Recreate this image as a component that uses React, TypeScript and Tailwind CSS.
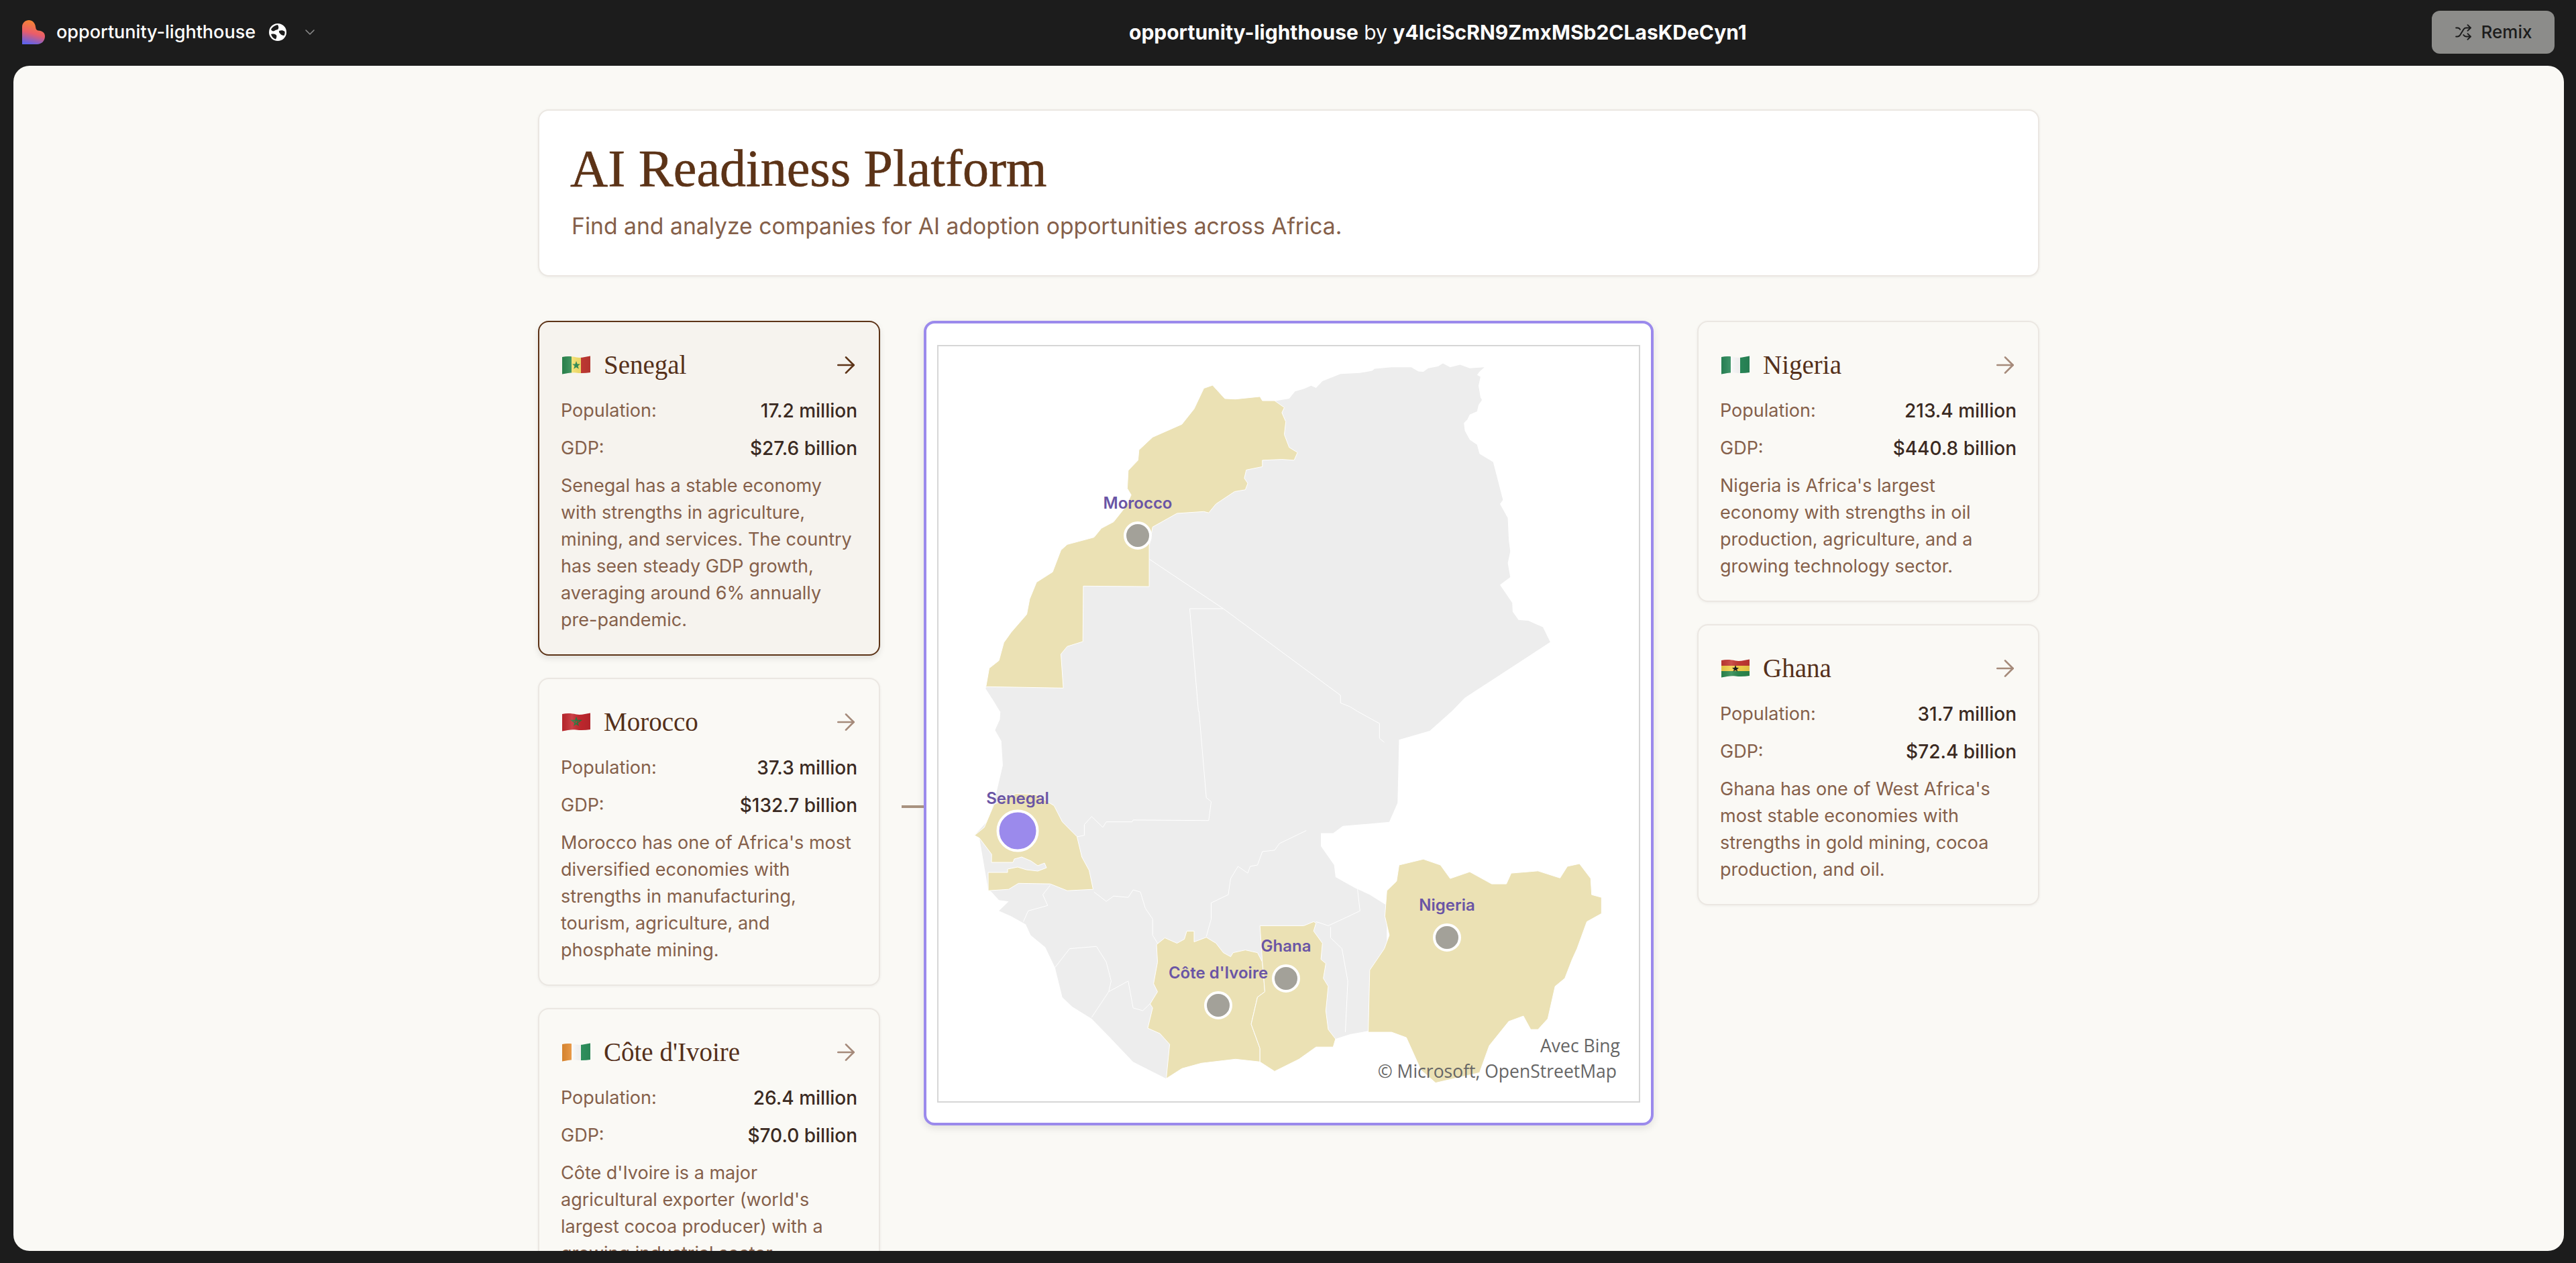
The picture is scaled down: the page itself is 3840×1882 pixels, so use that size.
import { ArrowRight, ChevronDown, Shuffle } from "lucide-react";

type P = [number, number];
const A = (pts: number[]): P[] => { const o: P[] = []; for (let i = 0; i < pts.length; i += 2) o.push([1340 + pts[i] / 1.375, 460 + pts[i + 1] / 2.613]); return o; };
const B = (pts: number[]): P[] => { const o: P[] = []; for (let i = 0; i < pts.length; i += 2) o.push([1340 + pts[i] / 1.375, 1060 + pts[i + 1] / 2.489]); return o; };
const str = (p: P[]) => p.map((q) => `${q[0].toFixed(1)},${q[1].toFixed(1)}`).join(" ");

const land = [
  ...A([770,360,800,350,812,322,830,312,845,300,855,308,868,282,905,254,945,250,970,242,975,234,1010,228,1050,228,1065,244,1075,246,1085,232,1105,225,1115,213,1130,228,1150,218,1170,232,1200,228,1190,245,1185,258,1192,265,1188,300,1192,345,1195,355,1188,375,1185,400,1170,412,1165,432,1158,445,1160,475,1170,510,1185,530,1190,565,1218,597,1238,745,1232,760,1248,815,1250,900,1253,945,1248,990,1253,1045,1232,1075,1257,1145,1258,1180,1270,1212,1290,1215,1320,1240,1335,1298,1160,1515,1133,1568]),
  ...B([1133,0,1088,72,1025,105,1022,340,1005,410,910,425,890,452,865,452,865,500,892,570,895,615,935,655,965,680,1000,720,1000,900,980,1000,980,1180,925,1197,895,1215,700,1200,560,1300,548,1362,480,1300,430,1205,395,1140,355,1095,335,1060,320,950,300,875,270,830,260,790,230,760,205,740,225,705,205,700,190,670,183,660,165,470,155,460,185,400,200,300,213,200,210,110,197,70,207,30,208,0]),
  ...A([207,1568,195,1530,178,1480,178,1470,400,1000,500,800]),
];
const morocco = A([178,1475,185,1400,205,1370,215,1300,230,1260,262,1190,268,1130,282,1065,315,1025,332,940,345,918,400,890,415,855,440,830,465,770,476,725,468,700,470,630,490,590,492,550,520,500,580,450,605,390,625,310,643,298,668,350,690,352,740,342,745,358,770,358,790,385,785,405,793,440,790,490,800,540,817,560,810,590,785,587,745,590,745,615,712,628,708,660,715,680,710,705,688,712,650,760,635,795,625,790,570,797,520,850,513,925,513,1082,378,1080,377,1296,345,1315,332,1345,337,1477,180,1472]);
const gambia: P[] = [[1473,1300],[1502,1300],[1502,1295],[1517,1292],[1530,1296],[1547,1298],[1560,1293],[1557,1286],[1547,1290],[1537,1283],[1523,1277],[1512,1280],[1510,1285],[1478,1285]];
const senegal = [
  ...B([155,460,175,430,195,345,240,305,280,308,318,350,335,410,365,465,375,540,390,590,398,660,345,665,310,640,245,638,225,660,183,665]),
  ...gambia,
  ...B([190,530,165,470]),
];
const ivory = B([548,1362,555,1235,535,1195,510,1175,520,1100,515,1085,530,1040,522,1010,530,930,528,865,545,840,570,860,585,845,590,815,605,815,605,855,630,838,650,860,665,895,680,910,685,895,710,885,735,895,745,930,750,1040,735,1060,722,1160,740,1250,740,1300,690,1290,620,1305,580,1325]);
const ghana = B([740,795,830,795,850,780,855,785,850,815,868,860,865,920,875,935,870,990,880,1020,875,1110,880,1180,895,1215,890,1245,855,1245,820,1290,770,1335,740,1300,740,1250,722,1160,735,1060,750,1040,745,930]);
const nigeria = B([962,1190,965,960,995,880,1005,830,996,760,1000,665,1020,630,1025,570,1075,548,1110,570,1130,620,1170,595,1215,640,1245,640,1255,600,1310,592,1355,618,1370,575,1395,565,1418,620,1420,680,1440,690,1440,750,1410,780,1390,880,1380,920,1365,990,1345,1020,1330,1140,1310,1180,1295,1180,1280,1130,1250,1150,1210,1240,1190,1340,1100,1378,1070,1330,1040,1210,1010,1190]);
const borders: P[][] = [
  [...A([513,975,665,1168,905,1505,905,1535,925,1550]), ...B([940,0,985,45,985,100,995,115])],
  A([596,1168,665,1168]),
  [...A([596,1168,614,1568]), ...B([615,0,630,320,640,335,635,405,480,403,478,410,425,410,418,430,395,390,380,420,380,460,365,465])],
  B([835,442,780,490,770,515,745,520,735,570,720,575,715,600,695,575,680,620,675,680,640,710,640,770,630,835]),
  B([855,780,880,795,910,770,945,740,940,660]),
  B([885,800,885,840,908,880,920,1000,915,1190]),
  B([400,670,425,705,440,685,470,690,480,662,495,670,505,730,520,770,520,830,530,860]),
  B([310,645,295,680,305,720,265,740,255,780]),
  B([320,950,350,880,405,872,425,930,435,1000,430,1040,395,1135]),
  B([430,1040,470,1000,480,1100,500,1110,520,1075]),
];

function Globe() {
  return (
    <svg width="28" height="28" viewBox="0 0 28 28" className="shrink-0">
      <circle cx="14" cy="14" r="13" fill="#fff" />
      <path d="M4 10C6 6 10 3.500 14 3c1 2 2 4 .5 6.500C13 11 11 10 9 12c-2 1-4 0-5-2zM16 12c3-1 6-1 8.500 1 .3 2 0 4-1 6-2 0-5-1-6-3-1-1-2-2-1.500-4zM4 17c3-1 6-.5 8 1.500 1 1.500 0 4-1 6C8 23.500 5 21 4 17z" fill="#1c1c1c" />
    </svg>
  );
}

function Flag({ c }: { c: string }) {
  return (
    <svg width="42" height="32" viewBox="0 0 42 32" className="shrink-0">
      <defs>
        <linearGradient id={`g${c}`} x1="0" y1="0" x2="1" y2="0">
          <stop offset="0" stopColor="#000" stopOpacity="0.08" />
          <stop offset="0.35" stopColor="#fff" stopOpacity="0.12" />
          <stop offset="0.7" stopColor="#000" stopOpacity="0.04" />
          <stop offset="1" stopColor="#000" stopOpacity="0.1" />
        </linearGradient>
        <clipPath id={`c${c}`}>
          <path d="M0 4C8 2.500 14 3 21 4.500S35 3.500 42 2.500V27C35 28 28 28.500 21 27.500S8 28 0 29.500Z" />
        </clipPath>
      </defs>
      <g clipPath={`url(#c${c})`}>
        {c === "sn" && (<g><rect x="0" y="0" width="14" height="32" fill="#2c8a50" /><rect x="14" y="0" width="14" height="32" fill="#f6e06a" /><rect x="28" y="0" width="14" height="32" fill="#c53a34" /><polygon points="21,10 22.600,14.500 27,14.500 23.500,17.300 24.800,21.800 21,19.200 17.200,21.800 18.500,17.300 15,14.500 19.400,14.500" fill="#2c8a50" /></g>)}
        {c === "ma" && (<g><rect x="0" y="0" width="42" height="32" fill="#c4282e" /><polygon points="21,9 23.800,20.500 14,13.500 28,13.500 18.200,20.500" fill="none" stroke="#1f7a3a" strokeWidth="1.300" /></g>)}
        {c === "ci" && (<g><rect x="0" y="0" width="14" height="32" fill="#e88f33" /><rect x="14" y="0" width="14" height="32" fill="#fafafa" /><rect x="28" y="0" width="14" height="32" fill="#2f9560" /></g>)}
        {c === "ng" && (<g><rect x="0" y="0" width="14" height="32" fill="#2a8a5a" /><rect x="14" y="0" width="14" height="32" fill="#fafafa" /><rect x="28" y="0" width="14" height="32" fill="#2a8a5a" /></g>)}
        {c === "gh" && (<g><rect x="0" y="0" width="42" height="12" fill="#c53a34" /><rect x="0" y="12" width="42" height="8" fill="#f4d24a" /><rect x="0" y="20" width="42" height="12" fill="#2c8a50" /><polygon points="21,11 22.500,15 26,15 23.200,17.500 24.200,20.500 21,18.700 17.800,20.500 18.800,17.500 16,15 19.500,15" fill="#111" /></g>)}
        <rect x="0" y="0" width="42" height="32" fill={`url(#g${c})`} />
      </g>
    </svg>
  );
}

type CardData = { c: string; name: string; pop: string; gdp: string; desc: string; active?: boolean };

function Card({ d }: { d: CardData }) {
  return (
    <div className={d.active
      ? "rounded-2xl border-2 border-[#5c3317] bg-[#f6f3ee] pt-8 pb-[31px] px-8 shadow-[0_4px_10px_rgba(0,0,0,0.1)]"
      : "rounded-2xl border-2 border-[#ebe7e2] bg-[#faf9f5] pt-8 pb-[31px] px-8 shadow-[0_1px_4px_rgba(0,0,0,0.05)]"}>
      <div className="flex h-16 items-center justify-between mb-4">
        <div className="flex items-center gap-[20px] pl-[2px]">
          <Flag c={d.c} />
          <span className="font-['Liberation_Serif',serif] text-[39px] text-[#55301a]">{d.name}</span>
        </div>
        <ArrowRight size={40} strokeWidth={1.6} className={d.active ? "-mr-[3px] text-[#5c3317]" : "-mr-[3px] text-[#a58a7a]"} />
      </div>
      <div className="flex h-10 items-center justify-between text-[#85604a]">
        <span>Population:</span><span className="text-[28px] font-medium text-[#3a2a22]">{d.pop}</span>
      </div>
      <div className="mt-4 flex h-10 items-center justify-between text-[#85604a]">
        <span>GDP:</span><span className="text-[28px] font-medium text-[#3a2a22]">{d.gdp}</span>
      </div>
      <p className="mt-4 text-[#85604a]">{d.desc}</p>
    </div>
  );
}

function Pin({ cls, dot, label, labelCls }: { cls: string; dot: string; label: string; labelCls: string }) {
  return (
    <>
      <div className={`absolute -translate-x-1/2 -translate-y-1/2 whitespace-nowrap text-[24px] font-semibold leading-none text-[#6a55a5] ${labelCls}`}>{label}</div>
      <div className={`absolute -translate-x-1/2 -translate-y-1/2 rounded-full border-4 border-white ${dot} ${cls}`} />
    </>
  );
}

const left: CardData[] = [
  { c: "sn", name: "Senegal", pop: "17.2 million", gdp: "$27.6 billion", active: true, desc: "Senegal has a stable economy with strengths in agriculture, mining, and services. The country has seen steady GDP growth, averaging around 6% annually pre-pandemic." },
  { c: "ma", name: "Morocco", pop: "37.3 million", gdp: "$132.7 billion", desc: "Morocco has one of Africa's most diversified economies with strengths in manufacturing, tourism, agriculture, and phosphate mining." },
  { c: "ci", name: "Côte d'Ivoire", pop: "26.4 million", gdp: "$70.0 billion", desc: "Côte d'Ivoire is a major agricultural exporter (world's largest cocoa producer) with a growing industrial sector." },
];
const right: CardData[] = [
  { c: "ng", name: "Nigeria", pop: "213.4 million", gdp: "$440.8 billion", desc: "Nigeria is Africa's largest economy with strengths in oil production, agriculture, and a growing technology sector." },
  { c: "gh", name: "Ghana", pop: "31.7 million", gdp: "$72.4 billion", desc: "Ghana has one of West Africa's most stable economies with strengths in gold mining, cocoa production, and oil." },
];

export default function App() {
  return (
    <div className="flex h-screen w-full flex-col overflow-hidden bg-[#1c1c1c] font-['Inter',sans-serif] text-[27px] leading-10">
      <header className="relative flex h-[98px] shrink-0 items-center justify-between pl-[33px] pr-8 pb-[2px]">
        <div className="flex items-center">
          <svg width="34" height="36" viewBox="0 0 34 36">
            <defs>
              <linearGradient id="lg" x1="0.6" y1="0" x2="0.35" y2="1">
                <stop offset="0" stopColor="#f58a2c" />
                <stop offset="0.55" stopColor="#ea5c6a" />
                <stop offset="1" stopColor="#6062ea" />
              </linearGradient>
            </defs>
            <path d="M0 10C0 4 5 0 10 0C15 0 19.500 4 20 10C20.500 13 21 15 24 15.500C30 16 34 18.500 34 24C34 31 29 36 22 36L0 36Z" fill="url(#lg)" />
          </svg>
          <span className="ml-[17px] text-[27px] font-medium text-white">opportunity-lighthouse</span>
          <span className="ml-[19px]"><Globe /></span>
          <ChevronDown size={24} strokeWidth={1.6} className="ml-[22px] text-[#8a8a8a]" />
        </div>
        <div className="absolute left-[1683px] top-[28px] whitespace-nowrap text-[30px] text-white">
          <span className="font-bold">opportunity-lighthouse</span> by <span className="font-bold">y4IciScRN9ZmxMSb2CLasKDeCyn1</span>
        </div>
        <button className="flex h-16 w-[183px] items-center justify-center gap-[14px] rounded-[12px] bg-[#8c8c8a] text-[26px] font-medium text-[#1c1c1c]">
          <Shuffle size={26} strokeWidth={1.8} />Remix
        </button>
      </header>
      <main className="ml-5 mr-[18px] mb-[18px] flex-1 overflow-hidden rounded-[24px] bg-[#faf9f5]">
        <div className="mx-auto w-[2238px] pt-[65px]">
          <section className="flex h-[249px] flex-col rounded-2xl border-2 border-[#ebe7e2] bg-white pl-[46px] pt-[42px] shadow-[0_1px_4px_rgba(0,0,0,0.06)]">
            <h1 className="font-['Liberation_Serif',serif] text-[78px] leading-[88px] text-[#5c3317] [-webkit-text-stroke:0.6px_#5c3317]">AI Readiness Platform</h1>
            <p className="mt-[18px] pl-[2px] text-[33.7px] leading-[48px] text-[#85604a]">Find and analyze companies for AI adoption opportunities across Africa.</p>
          </section>
          <div className="mt-[66px] flex items-start gap-[65px]">
            <div className="flex w-[510px] shrink-0 flex-col gap-[33px]">
              {left.map((d) => <Card key={d.name} d={d} />)}
            </div>
            <div className="relative h-[1199px] w-[1088px] shrink-0 rounded-2xl border-4 border-[#9b8aec] bg-white px-4 pt-8 pb-[30px] shadow-[0_4px_12px_rgba(0,0,0,0.1)]">
              <div className="absolute -left-[37px] top-[718px] h-1 w-[33px] bg-[#a8927f]" />
              <div className="relative h-full w-full border-2 border-[#d6d6d6]">
                <svg viewBox="1399 516 1044 1125" className="absolute inset-0 h-full w-full">
                  <polygon points={str(land)} fill="#ededed" />
                  {borders.map((b, i) => <polyline key={i} points={str(b)} fill="none" stroke="#fff" strokeWidth="1" />)}
                  {[morocco, senegal, ivory, ghana, nigeria].map((p, i) => <polygon key={i} points={str(p)} fill="#ebe1b4" stroke="#fff" strokeWidth="1" />)}
                </svg>
                <Pin label="Morocco" labelCls="left-[297px] top-[234px]" dot="h-[42px] w-[42px] bg-[#a3a199]" cls="left-[297px] top-[282px]" />
                <Pin label="Senegal" labelCls="left-[118px] top-[674px]" dot="h-[63px] w-[63px] bg-[#9b8aec]" cls="left-[118px] top-[722px]" />
                <Pin label="Nigeria" labelCls="left-[758px] top-[833px]" dot="h-[42px] w-[42px] bg-[#a3a199]" cls="left-[758px] top-[881px]" />
                <Pin label="Ghana" labelCls="left-[518px] top-[894px]" dot="h-[42px] w-[42px] bg-[#a3a199]" cls="left-[518px] top-[942px]" />
                <Pin label="Côte d'Ivoire" labelCls="left-[417px] top-[934px]" dot="h-[42px] w-[42px] bg-[#a3a199]" cls="left-[417px] top-[982px]" />
                <div className="absolute right-[28px] bottom-[67px] font-['Open_Sans',sans-serif] text-[26.5px] leading-8 text-[#666]">Avec Bing</div>
                <div className="absolute right-[33px] bottom-[29px] font-['Open_Sans',sans-serif] text-[26.5px] leading-8 text-[#666]">© Microsoft, OpenStreetMap</div>
              </div>
            </div>
            <div className="flex w-[510px] shrink-0 flex-col gap-[33px]">
              {right.map((d) => <Card key={d.name} d={d} />)}
            </div>
          </div>
        </div>
      </main>
    </div>
  );
}
